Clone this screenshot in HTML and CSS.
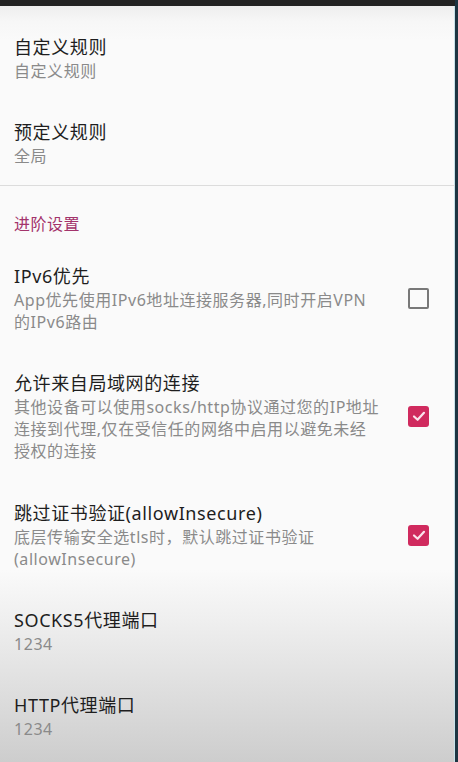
FILE: index.html
```html
<!DOCTYPE html>
<html lang="zh-CN">
<head>
<meta charset="utf-8">
<title>设置</title>
<link rel="stylesheet" href="styles.css">
</head>
<body>
<div class="screen">
  <div class="statusbar"></div>
  <div class="list">
    <div class="pref">
      <div class="text">
        <div class="title">自定义规则</div>
        <div class="summary">自定义规则</div>
      </div>
    </div>
    <div class="pref">
      <div class="text">
        <div class="title">预定义规则</div>
        <div class="summary">全局</div>
      </div>
    </div>
    <div class="divider"></div>
    <div class="category">进阶设置</div>
    <div class="pref">
      <div class="text">
        <div class="title">IPv6优先</div>
        <div class="summary">App优先使用IPv6地址连接服务器,同时开启VPN<br>的IPv6路由</div>
      </div>
      <span class="check"></span>
    </div>
    <div class="pref tall">
      <div class="text">
        <div class="title">允许来自局域网的连接</div>
        <div class="summary">其他设备可以使用socks/http协议通过您的IP地址<br>连接到代理,仅在受信任的网络中启用以避免未经<br>授权的连接</div>
      </div>
      <span class="check on"><svg viewBox="0 0 20 20" width="20" height="20"><polyline points="5,10.5 8.6,13.8 15,6.8" fill="none" stroke="#fbe3ec" stroke-width="2.2" stroke-linecap="round" stroke-linejoin="round"/></svg></span>
    </div>
    <div class="pref">
      <div class="text">
        <div class="title">跳过证书验证(allowInsecure)</div>
        <div class="summary">底层传输安全选tls时，默认跳过证书验证<br>(allowInsecure)</div>
      </div>
      <span class="check on"><svg viewBox="0 0 20 20" width="20" height="20"><polyline points="5,10.5 8.6,13.8 15,6.8" fill="none" stroke="#fbe3ec" stroke-width="2.2" stroke-linecap="round" stroke-linejoin="round"/></svg></span>
    </div>
    <div class="pref">
      <div class="text">
        <div class="title">SOCKS5代理端口</div>
        <div class="summary">1234</div>
      </div>
    </div>
    <div class="pref">
      <div class="text">
        <div class="title">HTTP代理端口</div>
        <div class="summary">1234</div>
      </div>
    </div>
  </div>
</div>
</body>
</html>
```

FILE: styles.css
```css
html, body {
  margin: 0;
  padding: 0;
}
body {
  width: 458px;
  height: 762px;
  overflow: hidden;
  font-family: "Noto Sans", "Noto Sans CJK SC", sans-serif;
}
.screen {
  width: 455px;
  height: 762px;
  border-right: 3px solid #1d3542;
  box-shadow: inset -1px 0 0 #c7e3ea;
  background: linear-gradient(to bottom, #eeeeee 6px, #f7f7f7 22px, #fafafa 40px, #fafafa 570px, #efefef 620px, #dcdcdc 700px, #cdcdcd 762px);
  overflow: hidden;
}
.statusbar {
  height: 6px;
  background: #232323;
}
.list {
  display: flex;
  flex-direction: column;
  padding-top: 9px;
}
.pref {
  display: flex;
  align-items: center;
  padding: 18.5px 26px 18.5px 14px;
}
.pref.tall {
  padding-bottom: 19.5px;
}
.text {
  flex: 1;
  min-width: 0;
}
.title {
  font-size: 18px;
  line-height: 26px;
  color: #1e1e1e;
  letter-spacing: 0.6px;
  white-space: nowrap;
}
.summary {
  font-size: 16px;
  line-height: 22px;
  color: #8a8a8a;
  letter-spacing: 0.55px;
  white-space: nowrap;
}
.divider {
  height: 1px;
  background: #dcdcdc;
  margin-top: -0.5px;
}
.category {
  padding: 27.5px 14px 9.5px;
  font-size: 16px;
  line-height: 22px;
  letter-spacing: 0.5px;
  color: #a3336b;
}
.check {
  flex: none;
  box-sizing: border-box;
  width: 21px;
  height: 21px;
  border: 2.5px solid #787878;
  border-radius: 2px;
  display: flex;
  align-items: center;
  justify-content: center;
}
.check.on {
  border: none;
  background: #d02a5e;
  border-radius: 3px;
}
```
